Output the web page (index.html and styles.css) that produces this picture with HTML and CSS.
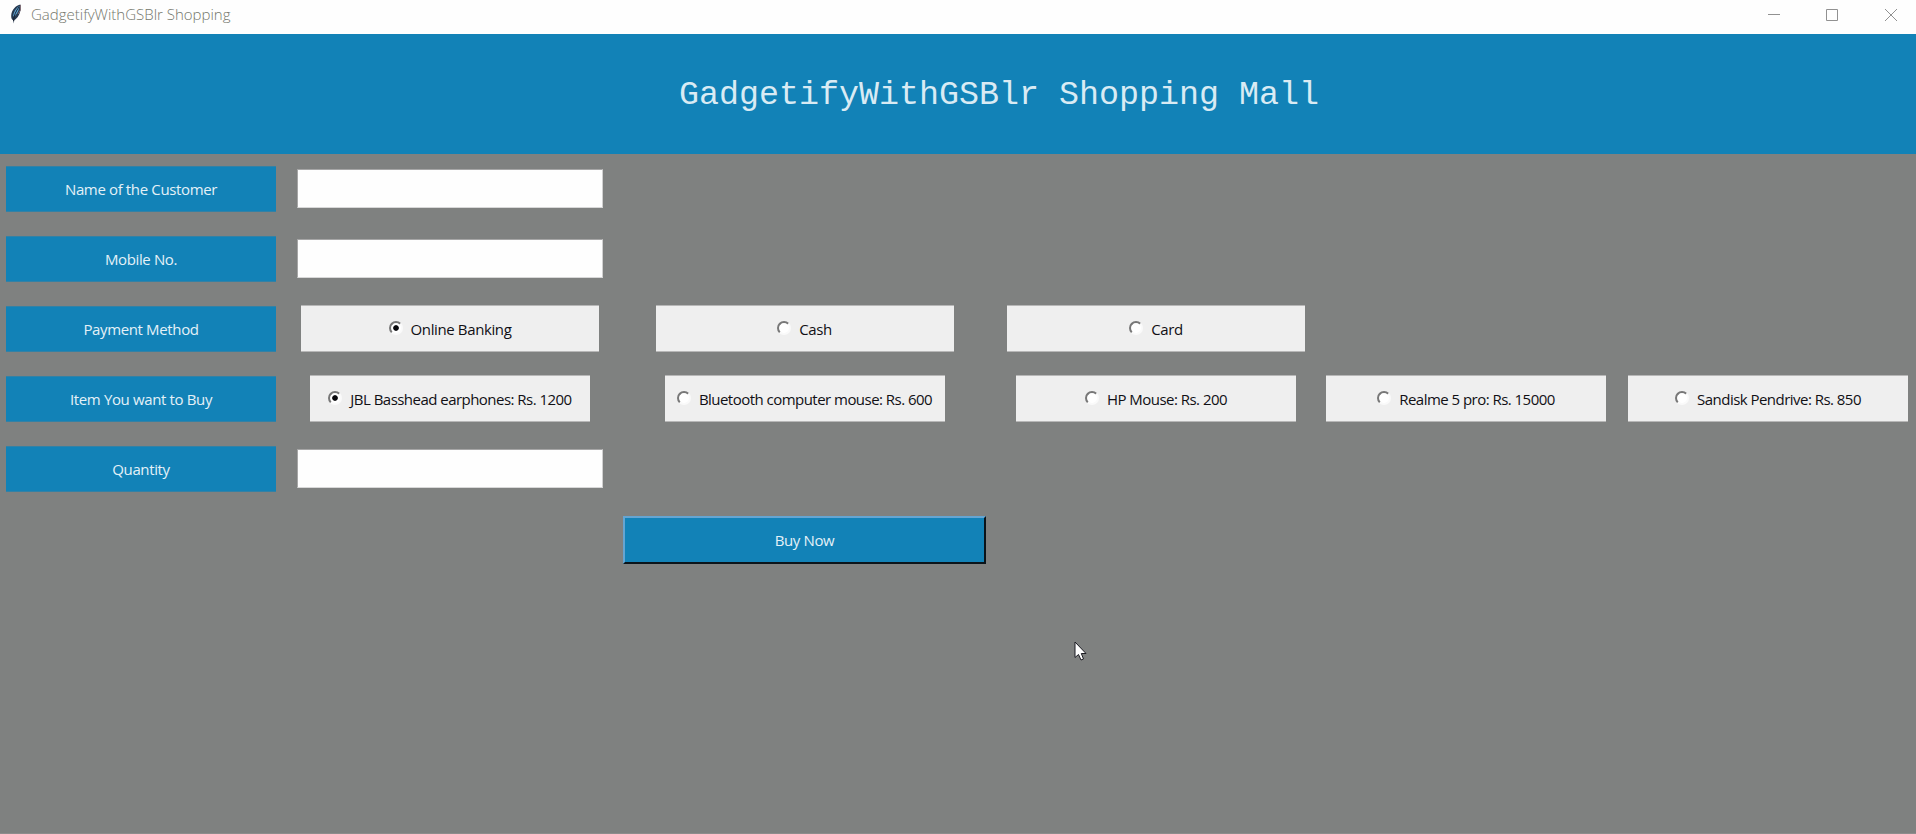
FILE: index.html
```html
<!DOCTYPE html>
<html lang="en">
<head>
<meta charset="utf-8">
<title>GadgetifyWithGSBlr Shopping</title>
<link rel="stylesheet" href="styles.css">
</head>
<body>
<div class="titlebar">
  <svg class="feather" width="12" height="20" viewBox="0 0 12 20"><path d="M10.500 0.500C6 1 1.500 6 1.200 11.500C1 14 2 16 3.200 16L3.600 19.500L4.400 16C8 14 10 9.500 10.500 6Z" fill="#26384f"/><path d="M9.500 2C6 4 3.500 8 3 12.500L5 12C7.500 9 9 6 9.500 2Z" fill="#5ea6d6"/><path d="M9 3C6 7 4 11 3.500 17" fill="none" stroke="#17202f"/><path d="M10.500 1V6L8 10" fill="none" stroke="#806f78"/></svg>
  <span class="caption">GadgetifyWithGSBlr Shopping</span>
  <svg class="controls" width="156" height="34" viewBox="0 0 156 34" fill="none" stroke="#919191"><path d="M8 14.500H20M66.500 9.500H77.500V20.500H66.500ZM125 9L137 21M137 9L125 21"/></svg>
</div>
<header class="banner"><h1>GadgetifyWithGSBlr Shopping Mall</h1></header>
<main class="form">
  <div class="label">Name of the Customer</div>
  <input class="entry" aria-label="Name of the Customer">

  <div class="label">Mobile No.</div>
  <input class="entry" aria-label="Mobile No.">

  <div class="label">Payment Method</div>
  <label class="option pay"><i class="dot on"></i><span>Online Banking</span></label>
  <label class="option pay"><i class="dot"></i><span>Cash</span></label>
  <label class="option pay"><i class="dot"></i><span>Card</span></label>

  <div class="label">Item You want to Buy</div>
  <label class="option"><i class="dot on"></i><span>JBL Basshead earphones: Rs. 1200</span></label>
  <label class="option"><i class="dot"></i><span>Bluetooth computer mouse: Rs. 600</span></label>
  <label class="option"><i class="dot"></i><span>HP Mouse: Rs. 200</span></label>
  <label class="option"><i class="dot"></i><span>Realme 5 pro: Rs. 15000</span></label>
  <label class="option last"><i class="dot"></i><span>Sandisk Pendrive: Rs. 850</span></label>

  <div class="label">Quantity</div>
  <input class="entry" aria-label="Quantity">

  <button class="buy">Buy Now</button>
</main>
<svg class="pointer" width="14" height="21" viewBox="0 0 14 21"><path d="M1 1V16.500L4.500 13.500L7 19L9.500 18L7.300 12.500H12Z" fill="#fff" stroke="#1b1b22"/></svg>
</body>
</html>
```
FILE: styles.css
```css
* { box-sizing: border-box; }
body {
  margin: 0;
  height: 834px;
  display: flex;
  flex-direction: column;
  overflow: hidden;
  background: #7f8180;
  font-family: "Open Sans", "Noto Sans", sans-serif;
  font-size: 15px;
}
.titlebar {
  height: 34px;
  flex: none;
  display: flex;
  align-items: flex-start;
  background: #fefefe;
}
.feather { margin: 4px 0 0 10px; }
.caption {
  margin-left: 9px;
  line-height: 29px;
  font-weight: 300;
  color: #74776c;
}
.controls { margin-left: auto; }
.banner {
  height: 120px;
  flex: none;
  padding: 42px 0 0 679px;
  background: #1282b7;
}
.banner h1 {
  margin: 0;
  font: 400 33.33px/38px "Courier New", "Liberation Mono", monospace;
  color: #d9ebf4;
  white-space: nowrap;
}
.form {
  flex: 1;
  display: grid;
  grid-template-columns: 282px 336px 373px 330px 290px 305px;
  grid-template-rows: repeat(5, 70px) 72px;
  align-items: center;
  justify-items: center;
  align-content: start;
  border-bottom: 1px solid #8d8c8c;
}
.label {
  grid-column: 1;
  width: 270px;
  height: 46px;
  padding-bottom: 1px;
  display: flex;
  align-items: center;
  justify-content: center;
  background: #1282b7;
  border: solid #3381a5;
  border-width: 1px 0;
  color: #e4f1f7;
  letter-spacing: -.36px;
}
.entry {
  width: 306px;
  height: 39px;
  margin-bottom: 1px;
  border: 1px solid;
  border-color: #a6a6a6 #d0d0d0 #d8d8d8 #a6a6a6;
  padding: 0;
  background: #fefefe;
}
.option {
  width: 280px;
  height: 47px;
  margin-bottom: 1px;
  display: flex;
  align-items: center;
  justify-content: center;
  gap: 8px;
  background: #efefef;
  border: solid #b7b7b7;
  border-width: 1px 0;
  color: #111015;
  letter-spacing: -.53px;
  white-space: nowrap;
}
.pay { width: 298px; letter-spacing: -.38px; }
.last { justify-self: end; margin-right: 8px; }
.dot {
  width: 14px;
  height: 14px;
  margin-bottom: 2px;
  border: 2px solid;
  border-color: #777 #fafafa #fafafa #777;
  border-radius: 50%;
  background: #fff;
}
.on { background: radial-gradient(circle, #08080c 2.4px, #fff 3.2px); }
.buy {
  grid-column: 3;
  grid-row: 6;
  width: 363px;
  height: 48px;
  padding: 0 0 1px;
  border: 2px solid;
  border-color: #65a5d2 #0b141a #0b141a #65a5d2;
  background: #1282b7;
  color: #e4f1f7;
  font: inherit;
  letter-spacing: -.36px;
}
.pointer { position: absolute; left: 1074px; top: 641px; }
```
